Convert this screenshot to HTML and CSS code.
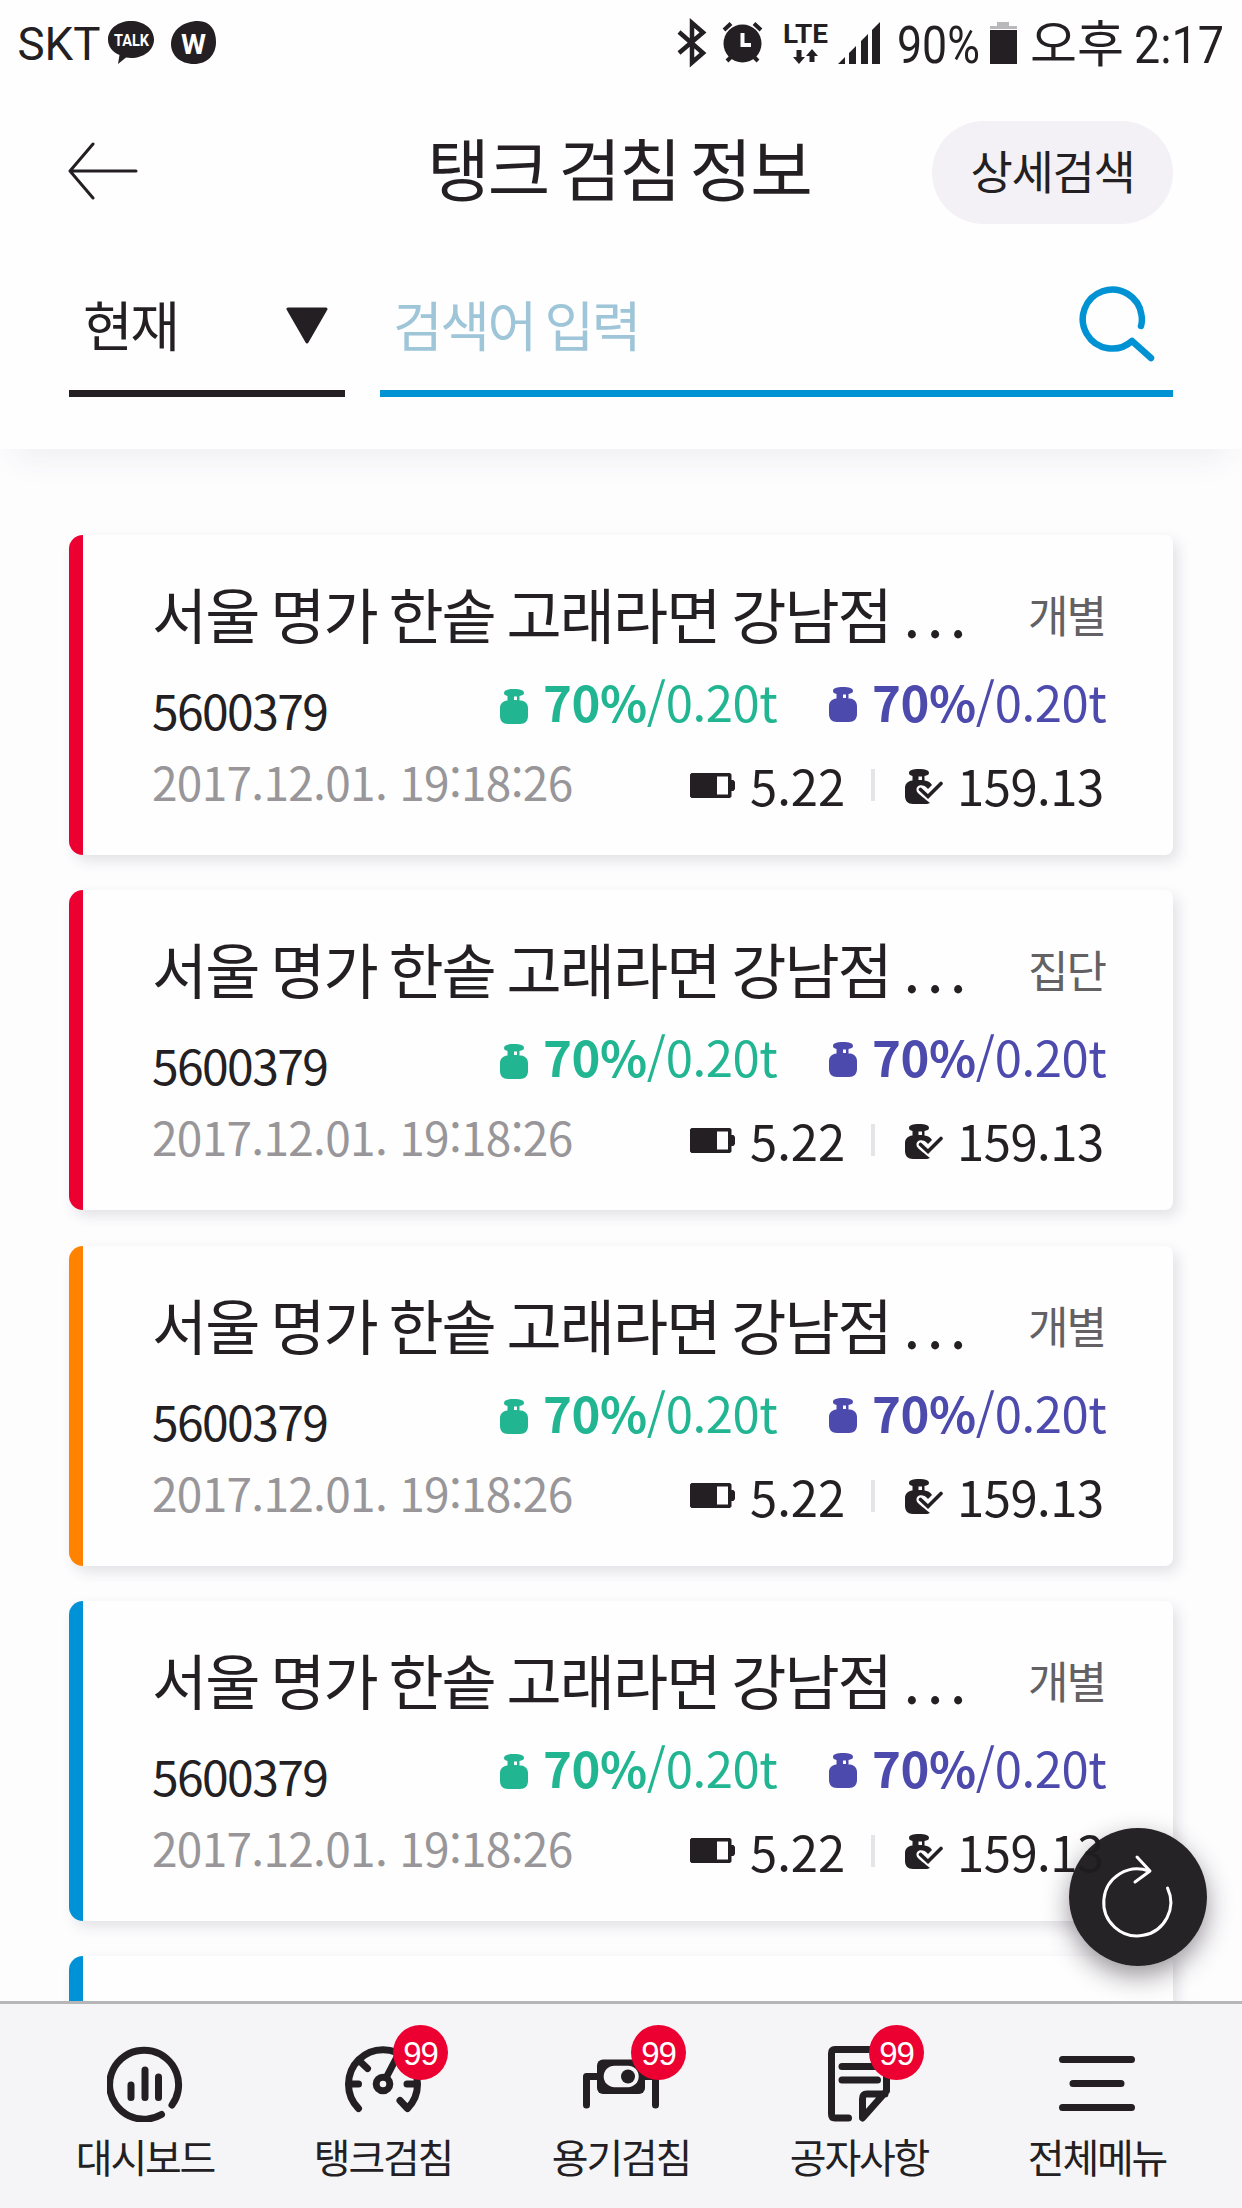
FILE: index.html
```html
<!DOCTYPE html>
<html lang="ko">
<head>
    <meta charset="UTF-8">
    <meta name="viewport" content="width=device-width, initial-scale=1.0">
    <title>탱크 검침 정보</title>
    <link rel="stylesheet" href="styles.css">
</head>
<body>
    <!-- Shared icons -->
    <svg class="defs" width="0" height="0">
        <symbol id="tank" viewBox="0 0 28 35">
            <path fill-rule="evenodd" d="M4 4C4 1 8 0 14 0S24 1 24 4C24 6 22 6.500 19.500 7V11.500H21C26 12 28 15.500 28 19V27C28 32 25 35 20 35H8C3 35 0 32 0 27V19C0 15.500 2 12 7.500 11.500V7C5.500 6.500 4 6 4 4ZM14 7.500V11H17V7.500Z"/>
        </symbol>
        <symbol id="tank-check" viewBox="0 0 38 35">
            <path fill-rule="evenodd" d="M4 4C4 1 8 0 14 0S24 1 24 4C24 6 22 6.500 19.500 7V11.500C23 12 25 13 27 16L23 20C18 14 11 16 11.500 21C12 24 13 24 25 34C23 35 21 35 20 35H8C3 35 0 32 0 27V19C0 15.500 2 12 7.500 11.500V7C5.500 6.500 4 6 4 4ZM13.500 7.500V11H17V7.500Z"/>
            <path d="M15.500 20.500L23 27.500L36 14.500" fill="none" stroke="#231f22" stroke-width="3.600" stroke-linecap="round"/>
        </symbol>
        <symbol id="battery" viewBox="0 0 45 25">
            <path fill-rule="evenodd" d="M1.500 0H40L41.500 1.500V7H43.500L45 9V16L43.500 18H41.500V23.500L40 25H1.500L0 23.500V1.500ZM27 3.500V21.500H38V3.500Z"/>
        </symbol>
    </svg>

    <div class="status">
        <svg width="1242" height="86" viewBox="0 0 1242 86">
            <text x="17.500" y="59.500" font-size="46" textLength="83" lengthAdjust="spacingAndGlyphs">SKT</text>
            <path d="M131 21C144 21 154 29 154 39.500S144 58 131 58L126 57.500L118 64L119.500 55C112 52 108 46 108 39.500C108 29 118 21 131 21Z"/>
            <text class="talk" x="114" y="46" font-size="17" textLength="35" lengthAdjust="spacingAndGlyphs">TALK</text>
            <path d="M198 21C210 21 216 30 216 42C216 55 207 64 194 64C180 64 171 55 171 44C171 30 184 21 198 21Z"/>
            <text class="talk" x="181" y="54" font-size="28" textLength="25" lengthAdjust="spacingAndGlyphs">W</text>
            <path d="M679 32L703 53L692 62.500V23L703 32.500L679 53" fill="none" stroke="#231f22" stroke-width="4.500"/>
            <circle cx="742.500" cy="43.500" r="19"/>
            <path d="M724 30L731 23.500M761 30L754 23.500M727 61L732 56M758 61L753 56" stroke="#231f22" stroke-width="4"/>
            <path d="M742.500 33V45H751" fill="none" stroke="#fff" stroke-width="4"/>
            <text class="lte" x="783" y="43" font-size="26" textLength="45" lengthAdjust="spacingAndGlyphs">LTE</text>
            <path d="M796.500 50H801.500V57H805L799 64L793 57H796.500ZM809.500 62H814.500V56H818L812 49L806 56H809.500Z"/>
            <path d="M838 64L845 57V64ZM849 53L856 46V64H849ZM861 41L868 34V64H861ZM872 30L880 22V64H872Z"/>
            <text x="897" y="62.500" font-size="52" textLength="83" lengthAdjust="spacingAndGlyphs">90%</text>
            <path d="M990 30H1017V64H990Z"/>
            <path d="M990 29V26H997V22H1009V26H1017V29Z" fill="#b9b8ba"/>
            <text class="ko" x="1030" y="62" font-size="50" textLength="94" lengthAdjust="spacingAndGlyphs">오후</text>
            <text x="1134" y="62.500" font-size="52" textLength="90" lengthAdjust="spacingAndGlyphs">2:17</text>
        </svg>
    </div>

    <header class="header">
        <div class="title-bar">
            <svg class="back" width="70" height="58" viewBox="0 0 70 58">
                <path d="M25 2L2 29L25 56M2 29H68" fill="none" stroke="#231f22" stroke-width="3" stroke-linecap="round" stroke-linejoin="round"/>
            </svg>
            <h1>탱크 검침 정보</h1>
            <button class="detail" type="button">상세검색</button>
        </div>
        <div class="search-bar">
            <div class="select">
                <span>현재</span>
                <svg width="42" height="37" viewBox="0 0 42 37">
                    <path d="M2 2H40L21 35Z" fill="#231f22" stroke="#231f22" stroke-width="3" stroke-linejoin="round"/>
                </svg>
            </div>
            <div class="search">
                <span>검색어 입력</span>
                <svg width="78" height="78" viewBox="0 0 78 78">
                    <path d="M63 41C64.500 36 64 33 63.500 30A29.500 29.500 0 1 0 54 56L73 73" fill="none" stroke="#0092d2" stroke-width="6.500" stroke-linecap="round" stroke-linejoin="round"/>
                </svg>
            </div>
        </div>
    </header>

    <main class="list">
        <article class="card red">
            <div class="name"><h2>서울 명가 한솥 고래라면 강남점 <i>...</i></h2><span>개별</span></div>
            <div class="info">
                <div class="meta"><p class="code">5600379</p><p class="date">2017.12.01. 19:18:26</p></div>
                <div class="values">
                    <p class="level">
                        <svg class="green"><use href="#tank"/></svg><span class="green"><b>70%</b>/0.20t</span>
                        <svg class="blue-tank"><use href="#tank"/></svg><span class="violet"><b>70%</b>/0.20t</span>
                    </p>
                    <p class="sensor">
                        <svg class="bat"><use href="#battery"/></svg><span class="volt">5.22</span>
                        <svg class="check"><use href="#tank-check"/></svg><span class="press">159.13</span>
                    </p>
                </div>
            </div>
        </article>

        <article class="card red">
            <div class="name"><h2>서울 명가 한솥 고래라면 강남점 <i>...</i></h2><span>집단</span></div>
            <div class="info">
                <div class="meta"><p class="code">5600379</p><p class="date">2017.12.01. 19:18:26</p></div>
                <div class="values">
                    <p class="level">
                        <svg class="green"><use href="#tank"/></svg><span class="green"><b>70%</b>/0.20t</span>
                        <svg class="blue-tank"><use href="#tank"/></svg><span class="violet"><b>70%</b>/0.20t</span>
                    </p>
                    <p class="sensor">
                        <svg class="bat"><use href="#battery"/></svg><span class="volt">5.22</span>
                        <svg class="check"><use href="#tank-check"/></svg><span class="press">159.13</span>
                    </p>
                </div>
            </div>
        </article>

        <article class="card orange">
            <div class="name"><h2>서울 명가 한솥 고래라면 강남점 <i>...</i></h2><span>개별</span></div>
            <div class="info">
                <div class="meta"><p class="code">5600379</p><p class="date">2017.12.01. 19:18:26</p></div>
                <div class="values">
                    <p class="level">
                        <svg class="green"><use href="#tank"/></svg><span class="green"><b>70%</b>/0.20t</span>
                        <svg class="blue-tank"><use href="#tank"/></svg><span class="violet"><b>70%</b>/0.20t</span>
                    </p>
                    <p class="sensor">
                        <svg class="bat"><use href="#battery"/></svg><span class="volt">5.22</span>
                        <svg class="check"><use href="#tank-check"/></svg><span class="press">159.13</span>
                    </p>
                </div>
            </div>
        </article>

        <article class="card blue">
            <div class="name"><h2>서울 명가 한솥 고래라면 강남점 <i>...</i></h2><span>개별</span></div>
            <div class="info">
                <div class="meta"><p class="code">5600379</p><p class="date">2017.12.01. 19:18:26</p></div>
                <div class="values">
                    <p class="level">
                        <svg class="green"><use href="#tank"/></svg><span class="green"><b>70%</b>/0.20t</span>
                        <svg class="blue-tank"><use href="#tank"/></svg><span class="violet"><b>70%</b>/0.20t</span>
                    </p>
                    <p class="sensor">
                        <svg class="bat"><use href="#battery"/></svg><span class="volt">5.22</span>
                        <svg class="check"><use href="#tank-check"/></svg><span class="press">159.13</span>
                    </p>
                </div>
            </div>
        </article>

        <article class="card blue"></article>
    </main>

    <button class="refresh" type="button" aria-label="새로고침">
        <svg width="138" height="138" viewBox="0 0 138 138">
            <path d="M98.500 60A33.500 33.500 0 1 1 80 43M68 29L81 43L66 54" fill="none" stroke="#fff" stroke-width="3" stroke-linecap="round" stroke-linejoin="round"/>
        </svg>
    </button>

    <nav class="tabs">
        <a class="tab">
            <div class="icon">
                <svg width="76" height="76" viewBox="0 0 76 76">
                    <path d="M65 59A34.500 34.500 0 1 0 54.500 68.500M24 39V51.500M38 24V51.500M51.500 31V51.500"/>
                </svg>
            </div>
            <span>대시보드</span>
        </a>
        <a class="tab">
            <div class="icon">
                <svg width="76" height="76" viewBox="0 0 76 76">
                    <path d="M13.500 62.500A34.500 34.500 0 1 1 62.500 62.500L55 54.500M13.500 14L22.500 22.500M4 38H13.500M62 38H72M42 30L53 9"/>
                    <circle cx="38" cy="38" r="6.800"/>
                </svg>
                <em>99</em>
            </div>
            <span>탱크검침</span>
        </a>
        <a class="tab">
            <div class="icon">
                <svg width="76" height="76" viewBox="0 0 76 76">
                    <path d="M3.500 59V30.500H16M60 30.500H72.500V59"/>
                    <rect class="fill" x="14" y="13.500" width="48" height="34.500" rx="6"/>
                    <rect class="hole" x="20.700" y="19.700" width="35" height="21.500" rx="10.700"/>
                    <circle class="fill" cx="45" cy="30.500" r="7"/>
                </svg>
                <em>99</em>
            </div>
            <span>용기검침</span>
        </a>
        <a class="tab">
            <div class="icon">
                <svg width="76" height="76" viewBox="0 0 76 76">
                    <path d="M27.500 72H14Q10.500 72 10.500 68V7.500Q10.500 3.500 14 3.500H65.500V45L41.500 72V53Q41.500 48 46 48H64M21 20.500H58M21 34H56.500"/>
                </svg>
                <em>99</em>
            </div>
            <span>공자사항</span>
        </a>
        <a class="tab">
            <div class="icon">
                <svg width="76" height="76" viewBox="0 0 76 76">
                    <path d="M3.500 13.500H72.500M14 37.500H62M3.500 61.500H72.500"/>
                </svg>
            </div>
            <span>전체메뉴</span>
        </a>
    </nav>
</body>
</html>
```
FILE: styles.css
```css
* {
    box-sizing: border-box;
    margin: 0;
    padding: 0;
}
body {
    display: flex;
    flex-direction: column;
    width: 1242px;
    height: 2208px;
    overflow: hidden;
    position: relative;
    background-color: #fdfdfe;
    color: #231f22;
    font-family: "Noto Sans CJK KR", sans-serif;
}
svg {
    display: block;
    flex: none;
}
button {
    border: none;
    font-family: inherit;
    color: inherit;
}
.defs {
    position: absolute;
}

/* Status bar */
.status {
    height: 86px;
    background-color: #fefefe;
    font-family: Roboto, sans-serif;
    fill: #231f22;
}
.status .talk {
    fill: #fff;
    font-weight: bold;
}
.status .lte {
    font-weight: bold;
}
.status .ko {
    font-family: "Noto Sans CJK KR", sans-serif;
}

/* Header */
.header {
    position: relative;
    height: 363px;
    padding: 35px 69px 0;
    background-color: #fefefe;
    box-shadow: 0 22px 30px -14px rgba(60, 50, 80, 0.08);
}
.title-bar {
    display: grid;
    grid-template-columns: 241px 1fr 241px;
    align-items: center;
    height: 103px;
}
.back {
    margin-top: -4px;
    margin-left: -1px;
}
h1 {
    font-size: 68px;
    font-weight: 400;
    line-height: 96px;
    letter-spacing: -2px;
    word-spacing: -7px;
    text-align: center;
    white-space: nowrap;
    margin: -12px 0 0 -4px;
}
.detail {
    height: 103px;
    border-radius: 52px;
    background-color: #f3f1f5;
    font-size: 46px;
    letter-spacing: -1.3px;
    padding-bottom: 7px;
}
.search-bar {
    display: flex;
    gap: 35px;
    margin-top: 48px;
    height: 125px;
}
.select, .search {
    display: flex;
    justify-content: space-between;
    border-bottom: 7px solid #231f22;
    font-size: 54px;
    line-height: 104px;
    letter-spacing: -2.4px;
    word-spacing: -3px;
}
.select {
    width: 276px;
    padding: 0 17px 0 14px;
}
.select svg {
    margin-top: 35px;
}
.search {
    flex: 1;
    padding: 0 17px 0 13px;
    border-color: #0092d2;
    color: #9ec5d8;
}
.search svg {
    margin-top: 13px;
}

/* List */
.list {
    flex: 1;
    display: flex;
    flex-direction: column;
    gap: 35.3px;
    padding: 86px 69px 0;
    overflow: hidden;
}
.card {
    flex: none;
    height: 320px;
    padding: 35px 68px 0 69px;
    border-left: 14px solid #ec0031;
    border-radius: 14px 8px 8px 14px;
    background-color: #fefefe;
    box-shadow: 5px 6px 14px rgba(50, 40, 60, 0.13);
}
.card.orange {
    border-color: #ff8200;
}
.card.blue {
    border-color: #0092d7;
}
.name {
    display: flex;
    justify-content: space-between;
    height: 84px;
}
h2 {
    font-size: 60px;
    font-weight: 400;
    line-height: 85px;
    letter-spacing: -2px;
    word-spacing: -3px;
    white-space: nowrap;
}
h2 i {
    font-style: normal;
    letter-spacing: 6.3px;
    margin-left: 1px;
}
.name span {
    font-size: 44px;
    line-height: 88px;
    letter-spacing: -2px;
    color: #636164;
}
.info {
    display: flex;
}
.meta {
    width: 348px;
    flex: none;
    padding-top: 20px;
    line-height: 71px;
    white-space: nowrap;
}
.code {
    font-size: 48px;
    letter-spacing: -1.6px;
}
.date {
    font-size: 46px;
    line-height: 73px;
    letter-spacing: -0.7px;
    color: #989699;
}
.values {
    width: 605px;
    flex: none;
    padding-top: 5px;
    font-size: 49px;
}
.level, .sensor {
    display: flex;
    align-items: center;
    height: 84px;
    line-height: 84px;
    white-space: nowrap;
}
.level svg {
    width: 28px;
    height: 35px;
    margin: 10px 15px 0 0;
    fill: currentColor;
}
.level span {
    width: 286px;
    letter-spacing: -0.4px;
}
.level .blue-tank {
    color: #4d4aad;
    margin: 7px 15px 0 0;
}
.level span.violet {
    width: 233px;
}
.green {
    color: #22b592;
}
.violet {
    color: #4d4aad;
}
.sensor svg {
    fill: #231f22;
}
.bat {
    width: 45px;
    height: 25px;
    margin: 0 15px 0 190px;
}
.volt {
    width: 125px;
    line-height: 32px;
    border-right: 4px solid #e6e4e8;
}
.check {
    width: 38px;
    height: 35px;
    margin: 2px 14px 0 30px;
}
.press {
    letter-spacing: -0.5px;
}

/* Floating refresh button */
.refresh {
    position: absolute;
    left: 1069px;
    top: 1828px;
    width: 138px;
    height: 138px;
    border-radius: 50%;
    background-color: rgba(31, 28, 31, 0.97);
    box-shadow: 0 10px 26px rgba(30, 20, 35, 0.45);
}

/* Bottom tabs */
.tabs {
    position: relative;
    display: flex;
    height: 207px;
    padding: 0 26px;
    border-top: 3px solid #b6b5b7;
    background-color: #f5f4f7;
}
.tab {
    flex: 1;
    display: flex;
    flex-direction: column;
    align-items: center;
    padding-top: 42px;
}
.icon {
    position: relative;
}
.icon svg {
    fill: none;
    stroke: #231f22;
    stroke-width: 7;
    stroke-linecap: round;
    stroke-linejoin: round;
}
.icon .fill {
    fill: #231f22;
    stroke: none;
}
.icon .hole {
    fill: #f5f4f7;
    stroke: none;
}
.icon em {
    position: absolute;
    left: 48px;
    top: -21px;
    width: 55px;
    height: 55px;
    border-radius: 50%;
    background-color: #ec0031;
    color: #fff;
    font: normal 33px/57px "Liberation Sans", Arial, sans-serif;
    letter-spacing: -1px;
    text-align: center;
}
.tab span {
    margin-top: 5px;
    font-size: 40px;
    line-height: 58px;
    letter-spacing: -2.2px;
}
```
